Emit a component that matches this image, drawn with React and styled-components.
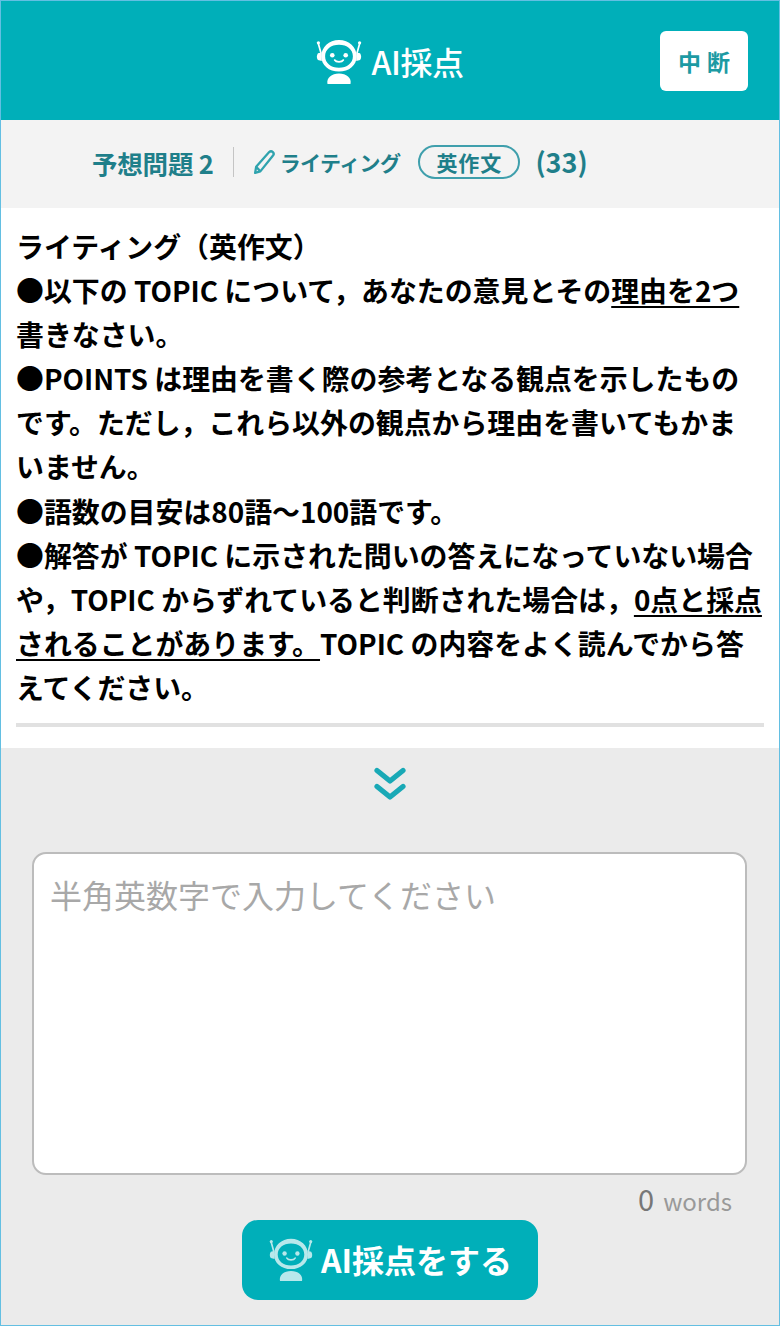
import React from 'react';
import styled, { createGlobalStyle } from 'styled-components';

const GlobalStyle = createGlobalStyle`
    html, body {
        margin: 0;
        padding: 0;
        background: #ebebeb;
    }
    * {
        box-sizing: border-box;
    }
`

const Page = styled.div`
    width: 780px;
    height: 1326px;
    display: flex;
    flex-direction: column;
    border: 1px solid #63bfe2;
    background: #ebebeb;
    font-family: "Noto Sans CJK JP", "Noto Sans", sans-serif;
    overflow: hidden;
`

const Header = styled.header`
    height: 119px;
    background: #00afb9;
    display: grid;
    grid-template-columns: 1fr auto 1fr;
    align-items: center;
`

const HeaderTitle = styled.h1`
    grid-column: 2;
    margin: 0;
    display: flex;
    align-items: center;
    gap: 9px;
    color: #fff;
    font-size: 32px;
    font-weight: 500;
    letter-spacing: -0.4px;
`

const AbortButton = styled.button`
    grid-column: 3;
    justify-self: end;
    width: 88px;
    height: 60px;
    margin: 0 31px 0 0;
    border: none;
    border-radius: 6px;
    background: #fff;
    color: #1c9aa3;
    font-family: inherit;
    font-size: 23px;
    font-weight: 700;
    letter-spacing: 6px;
    padding: 0 0 0 6px;
`

const SubHeader = styled.div`
    height: 88px;
    background: #f3f3f3;
    display: flex;
    align-items: center;
    padding: 0 0 4px 91px;
    color: #1f7f8a;
    font-weight: 700;
`

const SetName = styled.span`
    font-size: 25.5px;
    padding-right: 19px;
    letter-spacing: -0.2px;
`

const Divider = styled.span`
    width: 1px;
    height: 30px;
    background: #c4c4c4;
    margin-right: 18px;
`

const Kind = styled.span`
    display: flex;
    align-items: center;
    gap: 3px;
    font-size: 21px;
    letter-spacing: -0.6px;
`

const Tag = styled.span`
    width: 102px;
    height: 34px;
    margin-left: 18px;
    border: 2px solid #3f9fac;
    border-radius: 17px;
    display: flex;
    align-items: center;
    justify-content: center;
    font-size: 21px;
    letter-spacing: 1px;
`

const Count = styled.span`
    margin: -2px 0 0 15px;
    font-size: 27px;
`

const Instructions = styled.section`
    height: 540px;
    background: #fff;
    padding: 16px 15px 0 15px;
`

const Body = styled.div`
    height: 499px;
    font-size: 27.9px;
    font-weight: 700;
    line-height: 44.1px;
    color: #000;
    white-space: nowrap;
`

const Rule = styled.div`
    height: 4px;
    background: #e1e1e1;
`

const Under = styled.span`
    text-decoration: underline;
    text-underline-offset: 4px;
    text-decoration-thickness: 2px;
    text-decoration-skip-ink: none;
`

const Answer = styled.section`
    flex: 1;
    display: flex;
    flex-direction: column;
    align-items: center;
    padding: 19px 32px 0 31px;
`

const Chevrons = styled.svg`
    width: 32px;
    height: 36px;
    display: block;
    color: #19a9b6;
`

const InputBox = styled.div`
    width: 100%;
    height: 323px;
    margin-top: 49px;
    border: 2px solid #bcbcbc;
    border-radius: 14px;
    background: #fff;
    padding: 17px 16px;
    color: #a8a8a8;
    font-size: 32px;
    line-height: 46px;
`

const WordCount = styled.div`
    align-self: flex-end;
    margin-top: 4px;
    padding-right: 15px;
    color: #999;
    font-size: 24px;
    line-height: 38px;
    display: flex;
    align-items: baseline;
    gap: 9px;
`

const CountNumber = styled.span`
    font-size: 29px;
    color: #777;
`

const SubmitButton = styled.button`
    width: 296px;
    height: 80px;
    border: none;
    border-radius: 16px;
    background: #00afb9;
    color: #fff;
    font-family: inherit;
    font-size: 32px;
    font-weight: 700;
    display: flex;
    align-items: center;
    justify-content: center;
    gap: 8px;
    padding: 0 0 2px 2px;
`

function Robot({ size, color, opacity }) {
    return (
        <svg width={size} height={size} viewBox="0 0 48 48" style={{ opacity }} aria-hidden="true">
            <g fill={color}>
                <path d="M2 23c-1.500-1.500-1.500-5 0-7l4-1v9z" />
                <path d="M46 23c1.500-1.500 1.500-5 0-7l-4-1v9z" />
                <path d="M5 15 L2.500 6" stroke={color} strokeWidth="1.800" strokeLinecap="round" />
                <path d="M43 15 L45.500 6" stroke={color} strokeWidth="1.800" strokeLinecap="round" />
                <circle cx="2.500" cy="5" r="1.700" />
                <circle cx="45.500" cy="5" r="1.700" />
                <path fillRule="evenodd" d="M24 2C13.500 2 5.500 9.500 5.500 19S13.500 35 24 35s18.500-6.500 18.500-16S34.500 2 24 2zm0 5c8.500 0 14.500 5 14.500 12S32.500 31 24 31 9.500 26 9.500 19 15.500 7 24 7z" />
                <circle cx="17" cy="18" r="2.400" />
                <circle cx="31" cy="18" r="2.400" />
                <path d="M19.500 23c1.500 2.600 7.500 2.600 9 0" fill="none" stroke={color} strokeWidth="1.800" strokeLinecap="round" />
                <path d="M12 48c-1.500-6.500 4.500-11 12-11s13.500 4.500 12 11z" />
            </g>
        </svg>
    )
}

function Pencil() {
    return (
        <svg width="25" height="26" viewBox="0 0 24 24" fill="none" stroke="#2fa3ae" strokeWidth="2.200" strokeLinejoin="round" aria-hidden="true">
            <path d="M3 22.500l1-6L16.500 2.500c1-1 2.500-1 3.500 0s1 2.500 0 3.500L8 21z" />
            <path d="M4 16.500l4 4.500" />
        </svg>
    )
}

export default function App() {
    return (
        <Page>
            <GlobalStyle />
            <Header>
                <HeaderTitle>
                    <Robot size={46} color="#fff" />
                    AI採点
                </HeaderTitle>
                <AbortButton>中断</AbortButton>
            </Header>
            <SubHeader>
                <SetName>予想問題 2</SetName>
                <Divider />
                <Kind><Pencil />ライティング</Kind>
                <Tag>英作文</Tag>
                <Count>(33)</Count>
            </SubHeader>
            <Instructions>
                <Body>
                    ライティング（英作文）<br />
                    ●以下の TOPIC について，あなたの意見とその<Under>理由を2つ</Under><br />
                    書きなさい。<br />
                    ●POINTS は理由を書く際の参考となる観点を示したもの<br />
                    です。ただし，これら以外の観点から理由を書いてもかま<br />
                    いません。<br />
                    ●語数の目安は80語～100語です。<br />
                    ●解答が TOPIC に示された問いの答えになっていない場合<br />
                    や，TOPIC からずれていると判断された場合は，<Under>0点と採点</Under><br />
                    <Under>されることがあります。</Under>TOPIC の内容をよく読んでから答<br />
                    えてください。
                </Body>
                <Rule />
            </Instructions>
            <Answer>
                <Chevrons viewBox="0 0 32 36" fill="none" stroke="currentColor" strokeWidth="5.200" strokeLinecap="round" strokeLinejoin="round" aria-hidden="true">
                    <path d="M3 3.500L16 14 29 3.500" />
                    <path d="M3 19.500L16 30l13-10.500" />
                </Chevrons>
                <InputBox>半角英数字で入力してください</InputBox>
                <WordCount><CountNumber>0</CountNumber>words</WordCount>
                <SubmitButton>
                    <Robot size={44} color="#fff" opacity={0.72} />
                    AI採点をする
                </SubmitButton>
            </Answer>
        </Page>
    )
}
